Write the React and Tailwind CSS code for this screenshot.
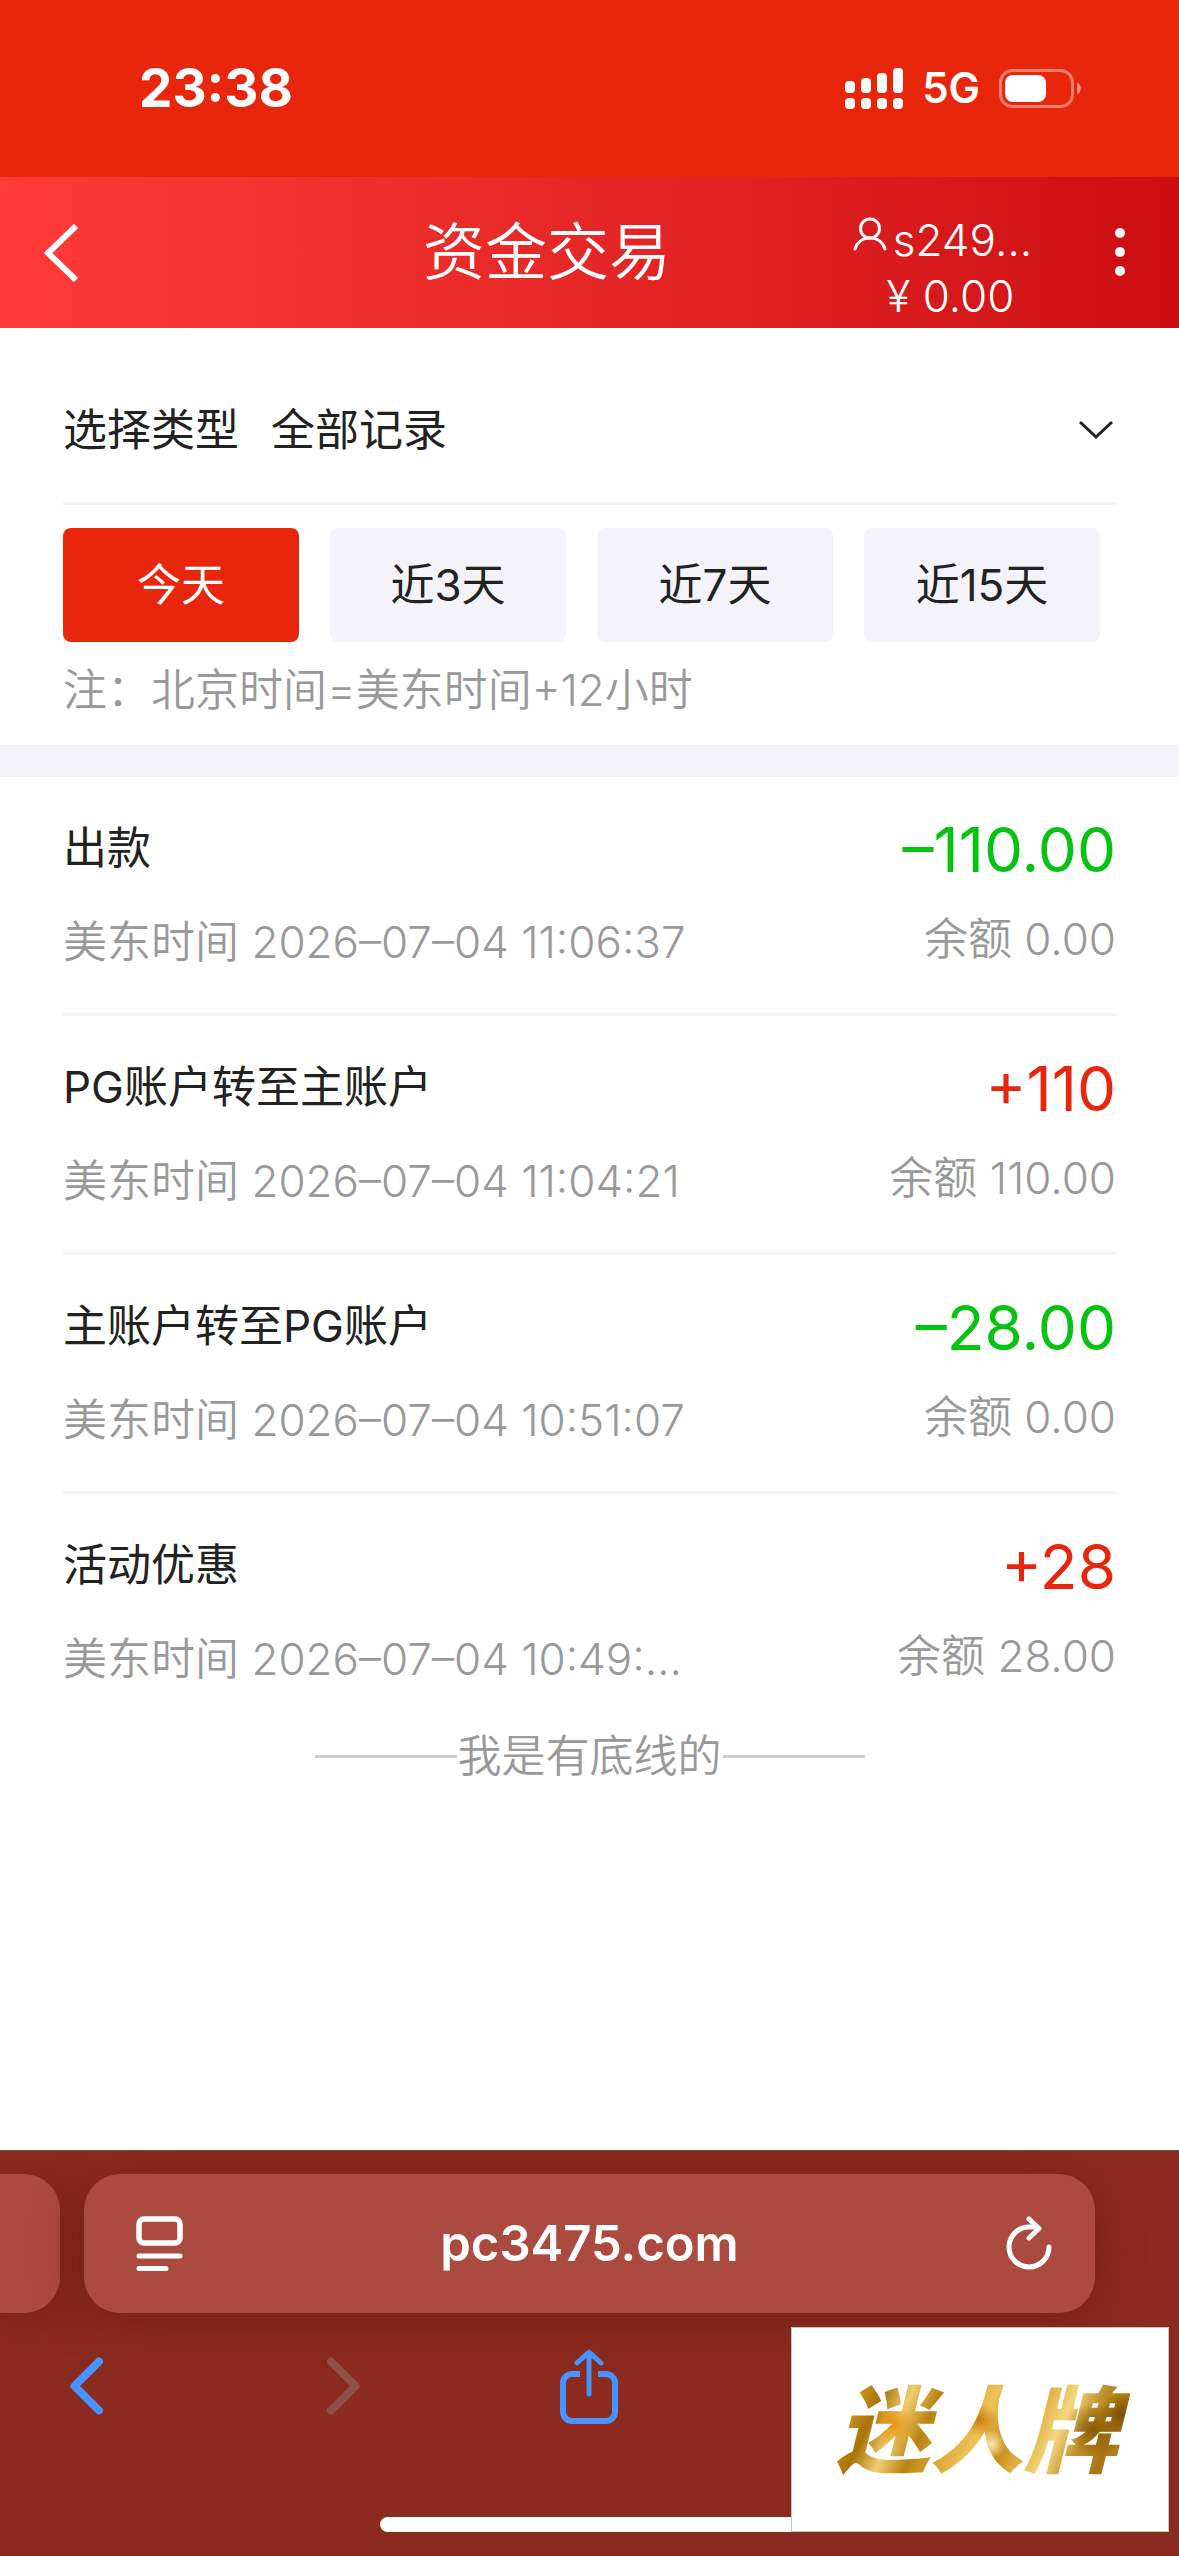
import { useState } from 'react';

const RANGES = ['今天', '近3天', '近7天', '近15天'];

const RECORDS = [
  { id: 1, title: '出款', amount: '–110.00', time: '2026–07–04 11:06:37', balance: '0.00' },
  { id: 2, title: 'PG账户转至主账户', amount: '+110', time: '2026–07–04 11:04:21', balance: '110.00' },
  { id: 3, title: '主账户转至PG账户', amount: '–28.00', time: '2026–07–04 10:51:07', balance: '0.00' },
  { id: 4, title: '活动优惠', amount: '+28', time: '2026–07–04 10:49:…', balance: '28.00' },
];

const StatusBar = () => (
  <div className="flex h-[177px] items-start justify-between bg-[#e7260c] pt-[58px] pr-[98px] pl-[139px] text-white">
    <span className="text-[53px] leading-[60px] font-bold">23:38</span>
    <div className="flex h-[60px] items-center gap-[19px]">
      <svg width="58" height="41" viewBox="0 0 58 41" fill="currentColor">
        <rect x="0" y="13" width="10" height="12" rx="4" />
        <rect x="16" y="10" width="10" height="15" rx="4" />
        <rect x="32" y="5" width="10" height="20" rx="4" />
        <rect x="48" y="0" width="10" height="25" rx="4" />
        <rect x="0" y="30" width="10" height="11" rx="4" />
        <rect x="16" y="30" width="10" height="11" rx="4" />
        <rect x="32" y="30" width="10" height="11" rx="4" />
        <rect x="48" y="30" width="10" height="11" rx="4" />
      </svg>
      <span className="text-[42px] leading-[60px] font-semibold">5G</span>
      <svg width="82" height="39" viewBox="0 0 82 39" fill="none">
        <rect x="1.5" y="1.5" width="72" height="36" rx="12" stroke="white" strokeOpacity="0.4" strokeWidth="3" />
        <rect x="6" y="6" width="41" height="27" rx="8" fill="white" />
        <path d="M78 13.500c5 2 5 10 0 12z" fill="white" fillOpacity="0.5" />
      </svg>
    </div>
  </div>
);

const Header = () => (
  <header className="grid h-[151px] grid-cols-[264px_1fr_225px_124px] items-center bg-linear-to-r from-[#ff3a38] to-[#cc0d12] text-white">
    <button aria-label="返回" className="flex h-full items-center pl-[44px]">
      <svg width="34" height="58" viewBox="0 0 34 58" fill="none" stroke="currentColor" strokeWidth="6">
        <path d="M32 2 4 29l28 27" />
      </svg>
    </button>
    <h1 className="text-center text-[62px] leading-[80px] font-[350]">资金交易</h1>
    <div className="flex flex-col items-center pt-[30px] font-[350]">
      <div className="flex items-start gap-[6px] text-[44px] leading-[56px]">
        <svg width="34" height="34" viewBox="0 0 34 34" fill="none" stroke="currentColor" strokeWidth="3" strokeLinecap="round" className="mt-[5px]">
          <circle cx="17" cy="11.500" r="9.500" />
          <path d="M2 32c2-7 8-11 15-11s13 4 15 11" />
        </svg>
        <span>s249…</span>
      </div>
      <span className="pl-4 text-[44px] leading-[56px]">¥ 0.00</span>
    </div>
    <button aria-label="更多" className="flex h-full items-center justify-center pl-[6px]">
      <svg width="10" height="50" viewBox="0 0 10 50" fill="currentColor">
        <circle cx="5" cy="5" r="5" />
        <circle cx="5" cy="24" r="5" />
        <circle cx="5" cy="43" r="5" />
      </svg>
    </button>
  </header>
);

const RecordRow = ({ record, last }) => (
  <li className={last ? '' : 'border-b-3 border-[#f4f3f9]'}>
    <div className="flex h-[236px] justify-between">
      <div className="flex flex-col gap-[30px] pt-[39px]">
        <span className="text-[44px] leading-[64px] text-[#222]">{record.title}</span>
        <span className="text-[44px] leading-[64px] font-[350] text-[#999]">美东时间 {record.time}</span>
      </div>
      <div className="flex flex-col items-end gap-[18px] pt-[34px]">
        <span className={`text-[62px] leading-[78px] ${record.amount.startsWith('+') ? 'text-[#e7260c]' : 'text-[#06c211]'}`}>
          {record.amount}
        </span>
        <span className="text-[44px] leading-[64px] font-[350] text-[#999]">余额 {record.balance}</span>
      </div>
    </div>
  </li>
);

const BrowserBar = () => (
  <footer className="relative h-[406px] overflow-hidden border-t border-[#6b4a40] bg-[#8b2a1f] text-white">
    <div className="flex gap-[24px] pt-[23px] pr-[84px]">
      <div className="h-[139px] w-[60px] rounded-r-[36px] bg-[#ab4a3e] shadow-[0_6px_50px_rgba(90,20,10,0.45)]" />
      <div className="flex h-[139px] flex-1 items-center justify-between rounded-[36px] bg-[#ab4a3e] pr-[43px] pl-[52px] shadow-[0_6px_50px_rgba(90,20,10,0.45)]">
        <button aria-label="页面设置">
          <svg width="48" height="56" viewBox="0 0 48 56" fill="none" stroke="currentColor" strokeWidth="5.500" strokeLinecap="round">
            <rect x="3" y="3" width="41" height="24" rx="5" />
            <path d="M3 40h41M3 52.500h27" strokeWidth="5" />
          </svg>
        </button>
        <button className="text-[49px] leading-[64px] font-semibold">pc3475.com</button>
        <button aria-label="刷新" className="flex w-[57px] justify-end">
          <svg width="46" height="56" viewBox="0 0 46 56" fill="none" stroke="currentColor" strokeWidth="5" strokeLinecap="round" strokeLinejoin="round">
            <path d="M43 31A20 20 0 1 1 23 11h7" />
            <path d="M23 3l10 9.500L23 22" />
          </svg>
        </button>
      </div>
    </div>
    <nav className="flex gap-[200px] pt-[32px] pl-[70px]">
      <button aria-label="后退" className="flex h-[82px] w-[57px] items-center text-[#4793ff]">
        <svg width="34" height="58" viewBox="0 0 34 58" fill="none" stroke="currentColor" strokeWidth="8" strokeLinecap="round" strokeLinejoin="round">
          <path d="M29 4.500 4.500 29 29 53.500" />
        </svg>
      </button>
      <button aria-label="前进" disabled className="flex h-[82px] items-center text-[#8f5049]">
        <svg width="33" height="58" viewBox="0 0 33 58" fill="none" stroke="currentColor" strokeWidth="8" strokeLinecap="round" strokeLinejoin="round">
          <path d="M4 4.500 28.500 29 4 53.500" />
        </svg>
      </button>
      <button aria-label="分享" className="flex h-[82px] items-center text-[#4793ff]">
        <svg width="58" height="75" viewBox="0 0 58 75" fill="none" stroke="currentColor" strokeWidth="6" strokeLinecap="round" strokeLinejoin="round">
          <path d="M20 25H12a9 9 0 0 0-9 9v29a9 9 0 0 0 9 9h34a9 9 0 0 0 9-9V34a9 9 0 0 0-9-9h-8" strokeLinecap="butt" />
          <path d="M29 45V4M17 14 29 3l12 11" strokeWidth="5" />
        </svg>
      </button>
    </nav>
    <div className="mx-auto mt-[90px] h-[15px] w-[419px] rounded-full bg-white" />
    <div className="absolute right-[10px] bottom-[24px] flex h-[205px] w-[378px] items-center justify-center border border-[#c4c4c4] bg-white">
      <span className="bg-[radial-gradient(circle_at_21%_46%,#e8930f_0%,transparent_9%),radial-gradient(circle_at_50%_42%,#c97d08_0%,transparent_10%),radial-gradient(circle_at_54%_62%,#fbe8ae_0%,transparent_8%),radial-gradient(circle_at_88%_50%,#8a5a06_0%,transparent_10%),radial-gradient(circle_at_97%_38%,#7d4f05_0%,transparent_7%),linear-gradient(115deg,#9a6605_0%,#cf9a22_10%,#a87308_18%,#efce70_26%,#b98311_34%,#dba634_42%,#eec35a_50%,#c58a15_58%,#dfae3d_64%,#f3d67c_72%,#c0902a_80%,#a87412_88%,#d6a32b_100%)] bg-clip-text pt-[3px] pr-[12px] pl-[6px] text-[94px] leading-[120px] font-black text-transparent italic">
        迷人牌
      </span>
    </div>
  </footer>
);

const App = () => {
  const [range, setRange] = useState('今天');

  return (
    <div className="flex min-h-screen flex-col bg-white font-['Inter','Noto_Sans_CJK_SC',sans-serif]">
      <StatusBar />
      <Header />

      <section className="px-[63px]">
        <div className="flex h-[177px] items-center border-b-3 border-[#f4f3f9] pt-[29px] text-[44px] leading-[64px] text-[#222]">
          <label htmlFor="record-type" className="mr-[32px]">选择类型</label>
          <select id="record-type" className="flex-1 appearance-none bg-transparent outline-none">
            <option>全部记录</option>
          </select>
          <svg width="36" height="20" viewBox="0 0 36 20" fill="none" stroke="currentColor" strokeWidth="3" className="pointer-events-none mr-0.5">
            <path d="M2 2l16 15L34 2" />
          </svg>
        </div>

        <div className="grid grid-cols-4 gap-[31px] pt-[23px] pr-[16px]">
          {RANGES.map((item) => (
            <button
              key={item}
              onClick={() => setRange(item)}
              className={`h-[114px] rounded-lg text-[44px] leading-[64px] ${item === range ? 'bg-[#e7260c] text-white' : 'bg-[#f4f3f9] text-[#222]'}`}
            >
              {item}
            </button>
          ))}
        </div>

        <p className="pt-[16px] pb-[23px] text-[44px] leading-[64px] font-[350] text-[#999]">注：北京时间=美东时间+12小时</p>
      </section>

      <div className="h-[32px] bg-[#f4f3f9]" />

      <main className="flex-1">
        <ul className="px-[63px]">
          {RECORDS.map((record, index) => (
            <RecordRow key={record.id} record={record} last={index === RECORDS.length - 1} />
          ))}
        </ul>
        <div className="-mt-1.5 flex items-center justify-center text-[44px] leading-[64px] font-[350] text-[#999]">
          <span className="h-[3px] w-[142px] bg-[#ccc]" />
          <span className="px-px">我是有底线的</span>
          <span className="h-[3px] w-[142px] bg-[#ccc]" />
        </div>
      </main>

      <BrowserBar />
    </div>
  );
};

export default App;
